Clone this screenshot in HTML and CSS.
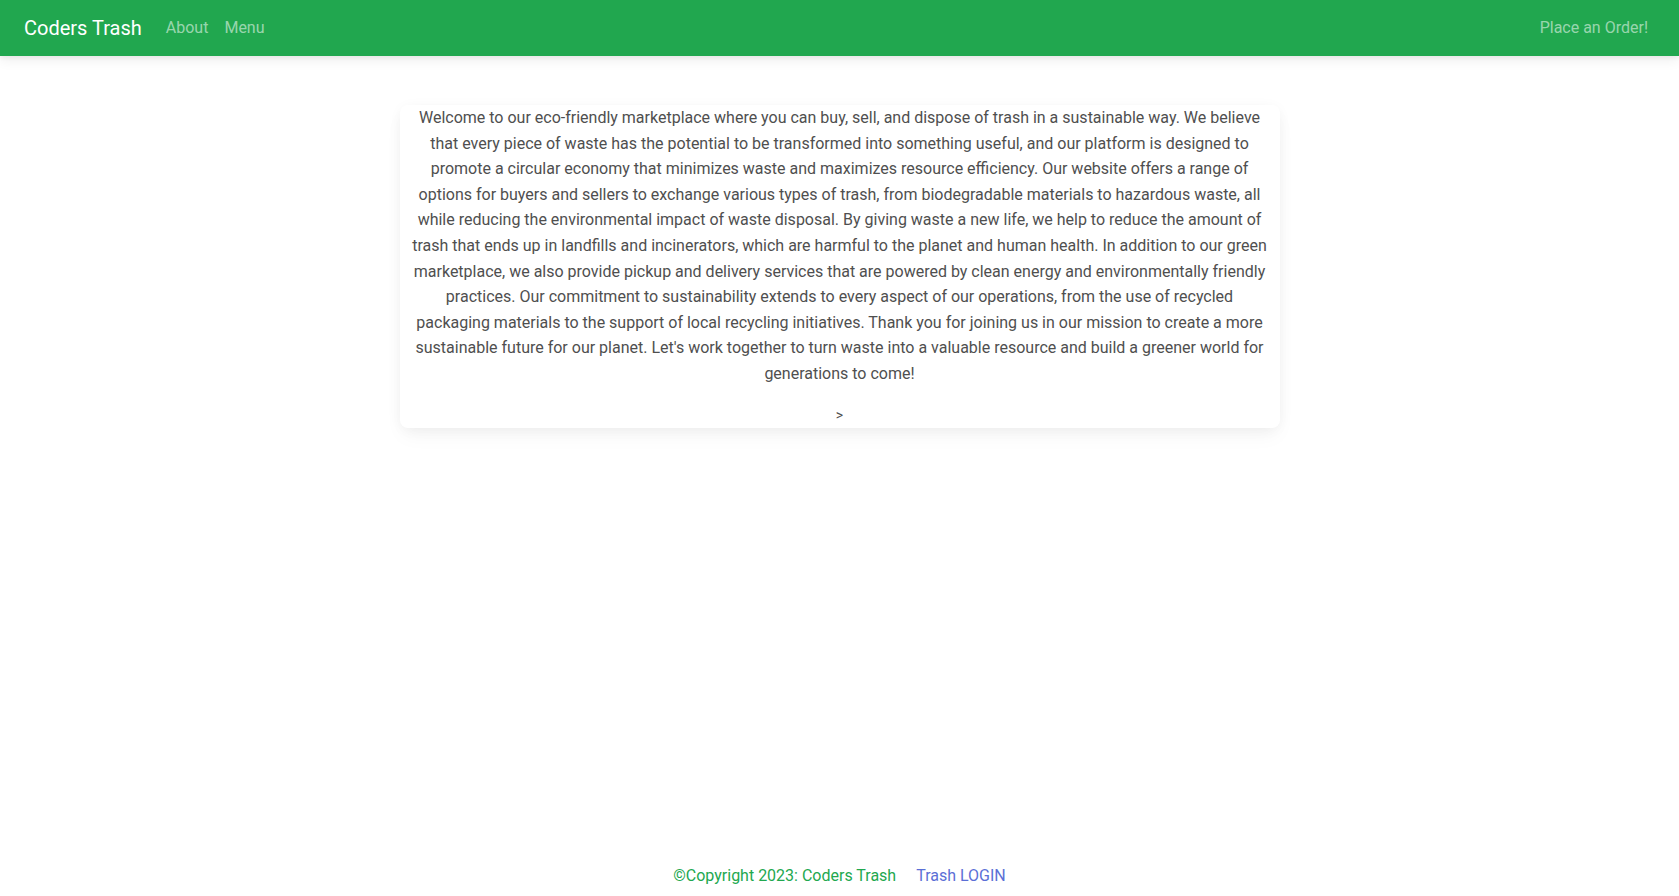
FILE: index.html
```html
<!DOCTYPE html>
<html lang="en">
<head>
<meta charset="utf-8">
<title>Coders Trash</title>
<link rel="stylesheet" href="styles.css">
</head>
<body>
<nav class="navbar">
  <div class="nav-left">
    <a class="brand" href="#">Coders Trash</a>
    <a class="nav-link" href="#">About</a>
    <a class="nav-link" href="#">Menu</a>
  </div>
  <a class="nav-link" href="#">Place an Order!</a>
</nav>
<main class="main">
  <div class="card">
    <p class="intro">Welcome to our eco-friendly marketplace where you can buy, sell, and dispose of trash in a sustainable way. We believe that every piece of waste has the potential to be transformed into something useful, and our platform is designed to promote a circular economy that minimizes waste and maximizes resource efficiency. Our website offers a range of options for buyers and sellers to exchange various types of trash, from biodegradable materials to hazardous waste, all while reducing the environmental impact of waste disposal. By giving waste a new life, we help to reduce the amount of trash that ends up in landfills and incinerators, which are harmful to the planet and human health. In addition to our green marketplace, we also provide pickup and delivery services that are powered by clean energy and environmentally friendly practices. Our commitment to sustainability extends to every aspect of our operations, from the use of recycled packaging materials to the support of local recycling initiatives. Thank you for joining us in our mission to create a more sustainable future for our planet. Let's work together to turn waste into a valuable resource and build a greener world for generations to come!</p>
    <div class="more">&gt;</div>
  </div>
</main>
<footer class="footer">
  <span class="copy">©Copyright 2023: Coders Trash</span>
  <a class="login" href="#">Trash LOGIN</a>
</footer>
</body>
</html>
```

FILE: styles.css
```css
* { box-sizing: border-box; }
html, body { margin: 0; padding: 0; }
body {
  font-family: Roboto, "Liberation Sans", sans-serif;
  font-size: 16px;
  line-height: 1.6;
  color: #4f4f4f;
  background: #fff;
  min-height: 100vh;
  display: flex;
  flex-direction: column;
}
a { text-decoration: none; }
.navbar {
  height: 56px;
  background: #21a74f;
  display: flex;
  align-items: center;
  justify-content: space-between;
  padding: 0 23px 0 24px;
  box-shadow: 0 4px 12px 0 rgba(0,0,0,.07), 0 2px 4px rgba(0,0,0,.05);
  position: relative;
  z-index: 1;
}
.nav-left { display: flex; align-items: center; }
.brand {
  color: #fff;
  font-size: 20px;
  margin-right: 16px;
  line-height: 1.6;
}
.nav-link {
  color: rgba(255,255,255,.55);
  padding: 8px;
  font-size: 16px;
}
.main {
  padding-top: 49px;
  display: flex;
  justify-content: center;
}
.card {
  width: 880px;
  background: #fff;
  border-radius: 8px;
  padding: 0 12px;
  text-align: center;
  box-shadow: 0 2px 15px -3px rgba(0,0,0,.07), 0 10px 20px -2px rgba(0,0,0,.04);
}
.intro { margin: 0 0 16px; }
.more { line-height: 25.6px; font-size: 14px; }
.footer {
  margin-top: auto;
  padding-bottom: 7px;
  display: flex;
  justify-content: center;
  gap: 20px;
}
.copy { color: #22a84f; }
.login { color: #5b6fd6; }
```
